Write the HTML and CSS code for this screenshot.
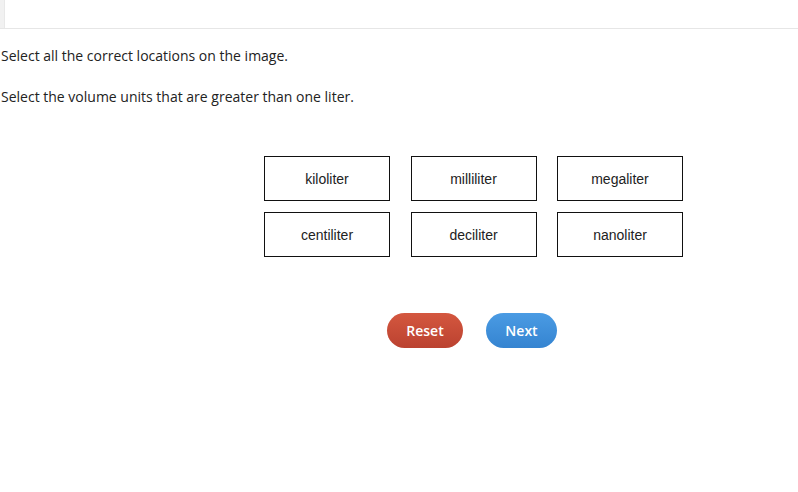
FILE: index.html
```html
<!DOCTYPE html>
<html>
<head>
<meta charset="utf-8">
<link rel="stylesheet" href="styles.css">
</head>
<body>
<div class="topbar"><div class="strip"></div></div>
<div class="content">
  <p class="prompt first">Select all the correct locations on the image.</p>
  <p class="prompt second">Select the volume units that are greater than one liter.</p>
  <div class="grid">
    <div class="cell">kiloliter</div>
    <div class="cell">milliliter</div>
    <div class="cell">megaliter</div>
    <div class="cell">centiliter</div>
    <div class="cell">deciliter</div>
    <div class="cell">nanoliter</div>
  </div>
  <div class="actions">
    <button class="btn reset">Reset</button>
    <button class="btn next">Next</button>
  </div>
</div>
</body>
</html>
```
FILE: styles.css
```css
html, body {
  margin: 0;
  padding: 0;
  background: #fff;
}
body {
  font-family: "Open Sans", "Liberation Sans", sans-serif;
  color: #222;
}
.topbar {
  height: 28px;
  border-bottom: 1px solid #e6e6e6;
  display: flex;
}
.strip {
  width: 4px;
  background: #f1f1f1;
  border-right: 1px solid #e8e8e8;
}
.content {
  padding-left: 1px;
}
.prompt {
  margin: 0;
  font-size: 14px;
  line-height: 20px;
}
.first {
  padding-top: 17px;
}
.second {
  padding-top: 21px;
}
.grid {
  margin-top: 49px;
  margin-left: 263px;
  display: grid;
  grid-template-columns: 126px 126px 126px;
  grid-auto-rows: 45px;
  column-gap: 20.5px;
  row-gap: 11px;
}
.cell {
  box-sizing: border-box;
  border: 1px solid #111;
  display: flex;
  align-items: center;
  justify-content: center;
  font-family: "Liberation Sans", Arial, sans-serif;
  font-size: 14px;
  color: #222;
}
.actions {
  margin-top: 56px;
  margin-left: 386px;
  display: flex;
  gap: 23px;
}
.btn {
  height: 35px;
  border: none;
  border-radius: 18px;
  color: #fff;
  font-family: "Open Sans", sans-serif;
  font-size: 14px;
  font-weight: 600;
  padding: 0;
}
.reset {
  width: 76px;
  background: linear-gradient(#d4573f, #bb4230);
}
.next {
  width: 71px;
  background: linear-gradient(#4a9be3, #3584d1);
}
```
